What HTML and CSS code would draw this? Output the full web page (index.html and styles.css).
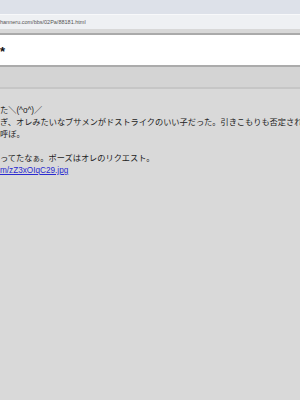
FILE: index.html
```html
<!DOCTYPE html>
<html lang="ja">

<head>
    <meta charset="UTF-8">
    <meta name="viewport" content="width=device-width, initial-scale=1.0">
    <title>88181</title>
    <link rel="stylesheet" href="styles.css">
</head>

<body>
    <div class="top-bar"></div>
    <div class="url-bar">hanneru.com/bbs/02Pa/88181.html</div>
    <div class="sep"></div>
    <div class="title">*</div>
    <div class="band"></div>
    <div class="post">
        <p>た＼(^o^)／</p>
        <p>ぎ、オレみたいなブサメンがドストライクのいい子だった。引きこもりも否定されなかった</p>
        <p>呼ぼ。</p>
        <p>&nbsp;</p>
        <p>ってたなぁ。ポーズはオレのリクエスト。</p>
        <p><a href="javascript:;">m/zZ3xOIqC29.jpg</a></p>
    </div>
</body>

</html>
```

FILE: styles.css
```css
* {
    margin: 0;
    padding: 0;
}

html,
body {
    height: 100%;
}

body {
    background-color: #d9d9d9;
    font-family: "Liberation Sans", "Noto Sans CJK JP", sans-serif;
    overflow: hidden;
}

.top-bar {
    height: 14px;
    background-color: #dde1e9;
}

.url-bar {
    height: 14px;
    background-color: #eef0f3;
    border-top: 1px solid #f7f8fa;
    font-size: 5.5px;
    line-height: 15px;
    color: #555;
    white-space: nowrap;
}

.sep {
    height: 4px;
    background-color: #d8d8d8;
    border-bottom: 2px solid #aaaaaa;
}

.title {
    height: 30px;
    background-color: #fff;
    font-size: 13px;
    font-weight: bold;
    line-height: 34px;
    color: #111;
}

.band {
    height: 20px;
    background-color: #d4d4d4;
    border-top: 2px solid #ababab;
    border-bottom: 2px solid #c6c6c6;
}

.post {
    padding-top: 16px;
    font-family: "Liberation Sans", "Noto Sans CJK JP", sans-serif;
    font-size: 8.2px;
    line-height: 12px;
    color: #222;
}

.post p {
    white-space: nowrap;
    overflow: hidden;
}

.post a {
    color: #2a2ad0;
    text-decoration: underline;
}
```
